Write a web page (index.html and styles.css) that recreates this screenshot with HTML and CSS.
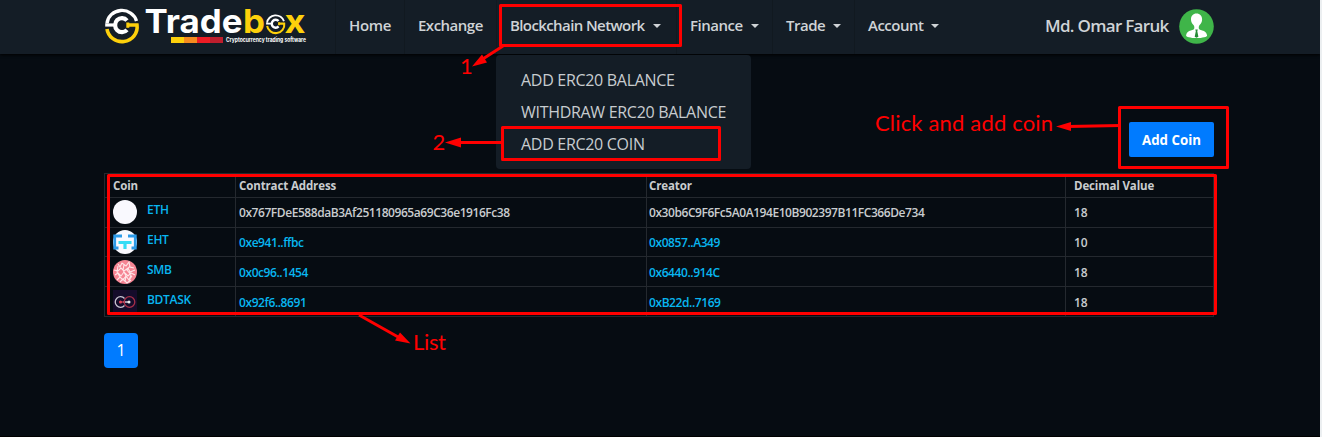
FILE: index.html
```html
<!DOCTYPE html>
<html lang="en">
<head>
<meta charset="utf-8">
<title>Tradebox</title>
<link rel="stylesheet" href="styles.css">
</head>
<body>
<svg width="0" height="0" class="defs" aria-hidden="true">
  <defs>
    <g id="mark" fill="none">
      <path d="M2 14.500A15 14 0 0 1 31.500 12" stroke="#fff" stroke-width="3.300"/>
      <path d="M2 20A15 14.500 0 0 0 32 16H22" stroke="#fdd00b" stroke-width="3.600"/>
      <path d="M0.200 16H9.500" stroke="#fff" stroke-width="3.200"/>
      <path d="M22 11.500A6.800 7 0 1 0 22 20.800" stroke="#fff" stroke-width="4.200"/>
      <path d="M22.800 13.500V18.800" stroke="#fdd00b" stroke-width="3"/>
    </g>
  </defs>
</svg>
<div class="page">
  <header class="navbar">
    <svg class="logo" width="203" height="54" viewBox="0 0 203 54">
      <use href="#mark" transform="translate(0 9)"/>
      <g class="word">
        <text x="39.500" y="33" textLength="98" lengthAdjust="spacingAndGlyphs" fill="#fff">Trade</text>
        <text x="138" y="33" textLength="22" lengthAdjust="spacingAndGlyphs" fill="#fdd00b">b</text>
        <text x="179.500" y="33" textLength="21" lengthAdjust="spacingAndGlyphs" fill="#fdd00b">x</text>
      </g>
      <use href="#mark" transform="translate(161 14.500) scale(.57)"/>
      <path fill="#fdd00b" d="M66 37h13v6H66z"/><path fill="#f68b1f" d="M79 37h13v6H79z"/>
      <path fill="#ed1c24" d="M92 37h13v6H92z"/><path fill="#be1e2d" d="M105 37h13v6h-13z"/>
      <text class="tagline" x="121" y="42" textLength="80" lengthAdjust="spacingAndGlyphs">Cryptocurrency trading software</text>
    </svg>
    <nav class="menu">
      <a class="home">Home</a>
      <a class="exchange">Exchange</a>
      <a class="network">Blockchain Network<i class="caret"></i></a>
      <a class="finance">Finance<i class="caret"></i></a>
      <a class="trade">Trade<i class="caret"></i></a>
      <a class="account">Account<i class="caret"></i></a>
    </nav>
    <div class="user">
      <span>Md. Omar Faruk</span>
      <svg width="35" height="35" viewBox="0 0 35 35">
        <circle cx="17.5" cy="17.5" r="17.3" fill="#3fb549"/>
        <path fill="#fff" d="M17.5 4.6c3.5 0 5.6 2.4 5.6 5.8 0 2.5-1.2 4.4-2.5 5.7-.8.9-.9 2-.8 3.3l1 1.4c3 .9 6.600 1.500 7.300 5.600.200 1.300-4.600 2.600-10.600 2.600S6.900 27.700 7.100 26.400c.7-4.100 4.200-4.700 7.200-5.600l1-1.400c.1-1.300 0-2.400-.8-3.300-1.300-1.300-2.500-3.200-2.500-5.700 0-3.400 2-5.800 5.500-5.800z"/>
        <path fill="#268b36" d="M16.300 20.600h2.500l-.5 1.700 1.100 5.500-1.900 1-1.800-1 1.100-5.500z"/>
      </svg>
    </div>
  </header>

  <div class="dropdown">
    <a>ADD ERC20 BALANCE</a>
    <a>WITHDRAW ERC20 BALANCE</a>
    <a>ADD ERC20 COIN</a>
  </div>

  <main class="content">
    <div class="toolbar"><button class="add">Add Coin</button></div>
    <table class="coins">
      <colgroup><col class="c1"><col class="c2"><col class="c3"><col class="c4"></colgroup>
      <tr class="head"><th>Coin</th><th>Contract Address</th><th>Creator</th><th>Decimal Value</th></tr>
      <tr class="tall first">
        <td><div class="coin"><svg width="24" height="24"><circle cx="12" cy="12" r="12" fill="#f9f9fe"/></svg><a>ETH</a></div></td>
        <td class="hash">0x767FDeE588daB3Af251180965a69C36e1916Fc38</td>
        <td class="hash">0x30b6C9F6Fc5A0A194E10B902397B11FC366De734</td><td>18</td>
      </tr>
      <tr class="short">
        <td><div class="coin"><svg width="24" height="24" viewBox="0 0 24 24"><circle cx="12" cy="12" r="12" fill="#f9f9fe"/><g fill="none" stroke-width="2.800"><path stroke="#2c9be8" d="M9 6H1.700V18H5.500M15 6h7.300V18h-3.800"/><path stroke="#36dcf5" stroke-width="3.200" d="M5.500 12.500h13M12 12.500V19"/></g></svg><a>EHT</a></div></td>
        <td><a>0xe941..ffbc</a></td><td><a>0x0857..A349</a></td><td>10</td>
      </tr>
      <tr class="tall low">
        <td><div class="coin"><svg width="24" height="24" viewBox="0 0 24 24"><circle cx="12" cy="12" r="12" fill="#f58593"/><g fill="none" stroke="#ffe6e8" stroke-width="1.100"><path d="M5 4l2 3 2-4 4 3 3-4 1 5 4 1M1 10l4 1 3-3 3 3 4-3 2 4 5-2M2 15l3-2 3 3 3-4 4 4 3-3 4 2M4 20l3-3 3 3 3-4 3 4 3-4M7 22l3-3 4 4 4-3M5 6l-1 6 3 5M11 5l-1 5 3 6-1 6M17 6l-3 4 4 5-2 5"/></g></svg><a>SMB</a></div></td>
        <td><a>0x0c96..1454</a></td><td><a>0x6440..914C</a></td><td>18</td>
      </tr>
      <tr class="tall low">
        <td><div class="coin"><svg width="24" height="24" viewBox="0 0 24 24"><path fill="#150c2b" d="M0 0h24v24H0z"/><g fill="none" stroke-width="1.300"><path stroke="#c9c5d2" d="M11.500 8.500a5.300 5.300 0 1 0 0 7M10 12h6"/><circle cx="16.500" cy="12" r="5.300" stroke="#a72f48"/><path stroke="#b83a51" d="M7 12h4"/></g><circle cx="7.500" cy="12" r="1.500" fill="#e14359"/><circle cx="16" cy="12" r="1.500" fill="#eee"/></svg><a>BDTASK</a></div></td>
        <td><a>0x92f6..8691</a></td><td><a>0xB22d..7169</a></td><td>18</td>
      </tr>
    </table>
    <a class="page-number">1</a>
  </main>

  <svg class="notes" width="1322" height="437" viewBox="0 0 1322 437">
    <g fill="none" stroke="#f00" stroke-width="3" stroke-linejoin="round">
      <rect x="500.500" y="5.500" width="180" height="40"/>
      <rect x="502.500" y="127.500" width="217" height="32"/>
      <rect x="1119.500" y="107.500" width="108" height="60"/>
      <rect x="108.500" y="175.500" width="1107" height="138"/>
      <path d="M503 46L482 59.500M502 142.500H458M1120 125.500L1068 126.500M359 315L399 337.500"/>
    </g>
    <g fill="#f00">
      <path d="M472 66.500L482 54.500 487 62.500zM445 142.500L461 137.500V147.500zM1056 126.500L1071 122V131zM410.500 343.500L400 332.500 395 340.500z"/>
      <text x="460" y="74">1</text>
      <text x="432.500" y="150">2</text>
      <text x="875" y="131" textLength="178">Click and add coin</text>
      <text x="413" y="350" textLength="33">List</text>
    </g>
  </svg>
</div>
</body>
</html>
```
FILE: styles.css
```css
* { box-sizing: border-box; }
body { margin: 0; background: #eceff1; font-family: "Open Sans", "Noto Sans", sans-serif; }
.defs { position: absolute; }
.page { position: relative; width: 1320px; height: 437px; background: #060c12; border-bottom: 1px solid #000; }
.navbar { display: flex; width: 1320px; height: 54px; background: #141d26; padding-left: 105px; box-shadow: 0 1px 3px #000; clip-path: inset(0 0 -5px 0); }
.logo { flex: none; overflow: visible; }
.word { font: 700 33px Inter, sans-serif; }
.tagline { font: 700 5.5px Inter, sans-serif; fill: #fff; }
.menu { display: flex; margin-left: 27px; color: #cfd3d6; font-size: 15px; font-weight: 600; line-height: 51px; }
.menu a { border-left: 1px solid #111920; padding-left: 13px; white-space: nowrap; letter-spacing: -.5px; }
.caret { display: inline-block; border: 4.5px solid transparent; border-top-color: #cfd3d6; border-bottom: 0; margin-left: 8px; vertical-align: 3px; }
.menu .home { width: 69px; letter-spacing: -.35px; }
.exchange { width: 92px; }
.menu .network { width: 180px; letter-spacing: -.6px; }
.finance { width: 96px; }
.trade { width: 82px; }
.account { width: 110px; }
.user { display: flex; align-items: center; gap: 10px; margin-left: 81px; height: 52px; color: #cfd3d6; font-size: 17px; font-weight: 600; white-space: nowrap; }
.user span { width: 124px; letter-spacing: -.7px; line-height: 20px; }
.dropdown { position: absolute; left: 496px; top: 55px; width: 255px; height: 114px; padding: 9px 25px; border-radius: 4px; background: #141d26; color: #c8ccd0; font-size: 16px; line-height: 33px; z-index: 1; }
.dropdown a { display: block; height: 32px; white-space: nowrap; letter-spacing: -.3px; }
.content { padding: 68px 106px 0 104px; }
.toolbar { display: flex; justify-content: flex-end; height: 51px; }
.add { width: 85px; height: 35px; padding: 0; border: 0; border-radius: 2px; background: #007bff; color: #fff; font: 700 13.3px/36px "Open Sans", sans-serif; }
.coins { width: 1110px; table-layout: fixed; border-collapse: collapse; color: #c9cccf; font-size: 12px; font-weight: 600; line-height: 16px; }
.c1 { width: 131px; } .c2 { width: 411px; } .c3 { width: 419px; } .c4 { width: 148px; }
.coins th, .coins td { border: 1px solid #24292f; padding: 0 3px; text-align: left; white-space: nowrap; }
.coins th:nth-child(3), .coins td:nth-child(3) { padding-left: 2px; }
.coins th { font-weight: 700; font-size: 11.5px; letter-spacing: -.12px; }
.coins td:first-child, .coins th:first-child { padding-left: 8px; }
.coins td:last-child, .coins th:last-child { padding-left: 8px; }
.coins .head { height: 24px; }
.coins .tall { height: 30px; }
.coins .short { height: 29px; }
.coins a { color: #08b6f0; letter-spacing: -.42px; }
.coin { display: flex; gap: 10px; height: 24px; }
.coins .coin a { line-height: 20px; letter-spacing: -.3px; }
.coins .first td:first-child { padding-bottom: 2px; }
.coins td:not(:first-child) { padding-top: 1px; }
.coins .low td:not(:first-child) { padding-top: 3px; }
.coins .hash { letter-spacing: -.44px; }
.page-number { display: block; width: 34px; height: 35px; margin-top: 16px; border-radius: 4px; background: #007bff; color: #fff; text-align: center; font-size: 16px; line-height: 35px; }
.notes { position: absolute; left: 0; top: 0; z-index: 2; font: 22px Lato, sans-serif; }
```
